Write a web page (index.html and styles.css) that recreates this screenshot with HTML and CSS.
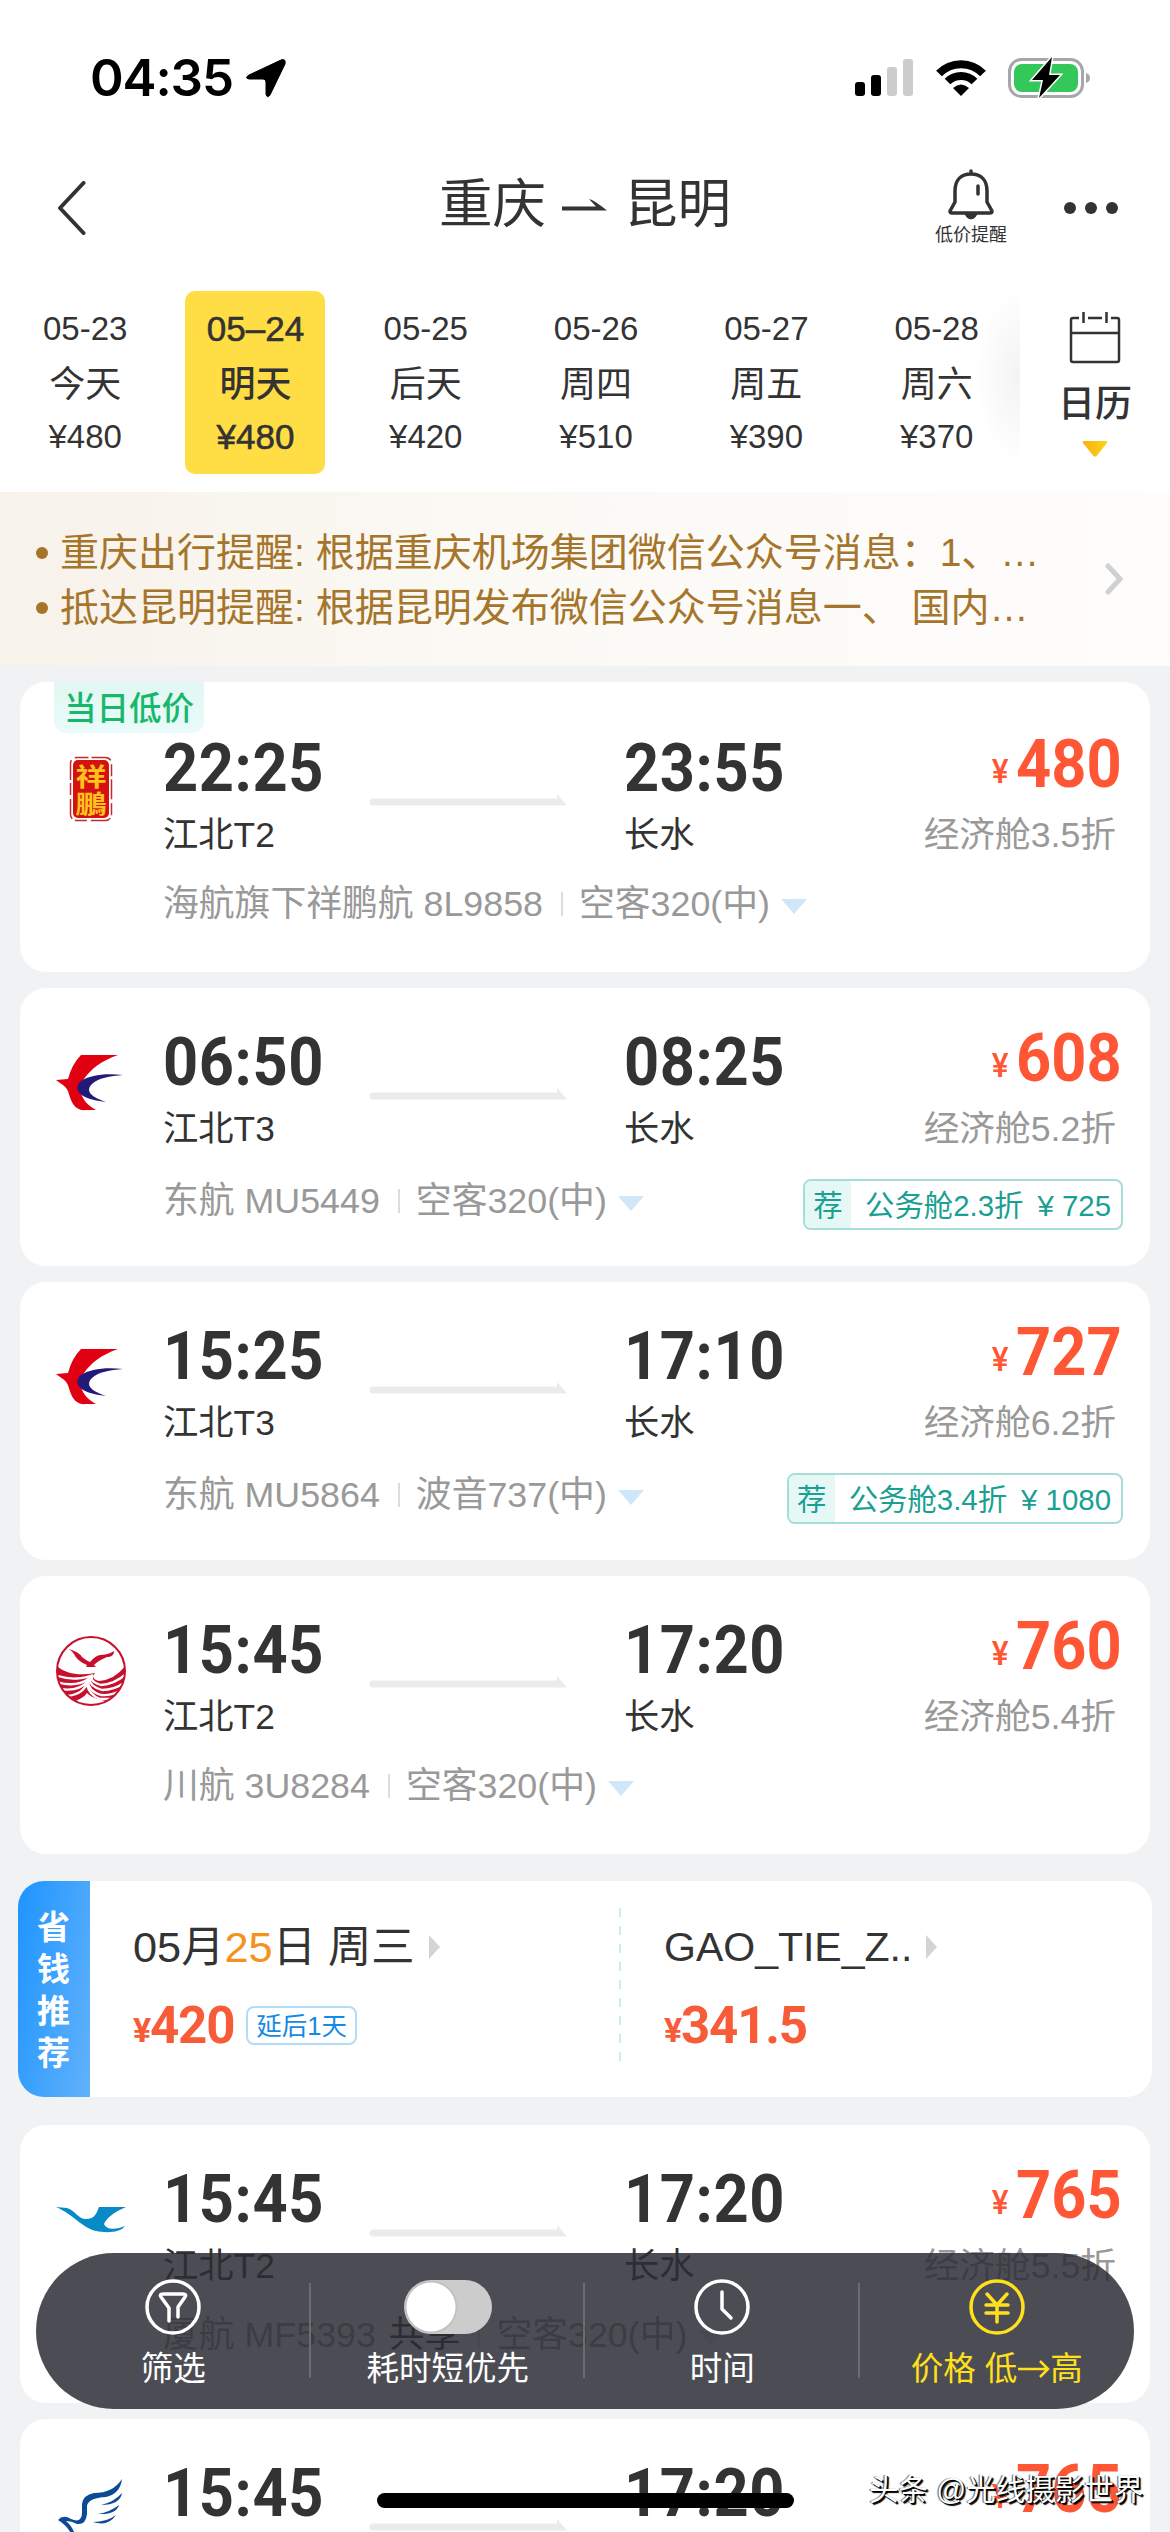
FILE: index.html
```html
<!DOCTYPE html>
<html lang="zh-CN">
<head>
<meta charset="utf-8">
<title>重庆 - 昆明</title>
<link rel="stylesheet" href="styles.css">
</head>
<body>
<svg class="defs" width="0" height="0">
  <symbol id="route" viewBox="0 0 198 12"><path d="M4 4.500H188V0l10 11.500H4a3.500 3.500 0 0 1 0-7z" fill="#ebebeb"/></symbol>
  <symbol id="down" viewBox="0 0 26 15"><path d="M0 0h26L13 15z" fill="#cfe7f9"/></symbol>
  <symbol id="eastern" viewBox="0 0 68 56">
    <path d="M26 0H63C46 6 36 14 29 24C21 35 28 48 41 55H30Q23 56 18 49C13 41 15 35 8 30Q5 28 1 25L13 24Q17 9 26 0z" fill="#e00012"/>
    <path d="M68 20C50 18 35 20 26 26C18 33 22 44 51 47C36 42 30 36 37 29C43 23 55 21 68 20z" fill="#221a7a"/>
  </symbol>
</svg>
<div class="page">
  <header class="status">
    <div class="clock">04:35
      <svg width="41" height="39" viewBox="0 0 41 39"><path d="M36 1Q41-1 40 5L25 36Q22 40 21 35V23Q21 20 18 20H4Q-1 19 4 16z" stroke="#000"/></svg>
    </div>
    <div class="signals">
      <svg width="59" height="38" viewBox="0 0 59 38"><rect y="23" width="10" height="14" rx="3"/><rect x="16" y="16" width="10" height="21" rx="3"/><g fill="#ccc"><rect x="32" y="8" width="10" height="29" rx="3"/><rect x="48" width="10" height="37" rx="3"/></g></svg>
      <svg width="50" height="38" viewBox="0 0 50 38"><g fill="none" stroke="#000" stroke-width="8"><path d="M3 14.500C15 2 35 2 47 14.500"/><path d="M11.500 22.500C19 15 31 15 38.500 22.500"/></g><path d="M17 29Q25 22 33 29L25 37z"/></svg>
      <svg width="83" height="42" viewBox="0 0 83 42"><rect x="1.500" y="2.500" width="73" height="37" rx="12" fill="none" stroke="#a5a7a8" stroke-width="3"/><rect x="6" y="7" width="64" height="28" rx="8" fill="#34c759"/><path d="M78 16q4 1 4 5t-4 5z" fill="#a5a7a8"/><path d="M44 0L24 23H35L31 41L52 18H41z" stroke="#fff" stroke-width="3" paint-order="stroke"/></svg>
    </div>
  </header>

  <nav class="nav">
    <svg class="back" width="30" height="54" viewBox="0 0 30 54"><path d="M26.500 2L3 27L26.500 52" fill="none" stroke="#333" stroke-width="4" stroke-linecap="round" stroke-linejoin="round"/></svg>
    <h1>重庆<svg width="46" height="12" viewBox="0 0 46 12"><path d="M0 7.500H34L27 0Q32 1 45 11.500H0z" fill="#333"/></svg>昆明</h1>
    <div class="alert">
      <svg width="46" height="52" viewBox="0 0 46 52" fill="none" stroke="#333" stroke-width="3.500" stroke-linejoin="round" stroke-linecap="round"><path d="M23 2V5M7 33V22C7 11 13 5 23 5S39 11 39 22V33L44 42Q44 44 42 44H4Q2 44 2 42zM30 17V25"/><path d="M17 45Q19 50 23 50T29 45z" fill="#333" stroke-width="1"/></svg>
      <span>低价提醒</span>
    </div>
    <svg class="more" width="56" height="14" viewBox="0 0 56 14" fill="#333"><circle cx="7" cy="7" r="6"/><circle cx="28" cy="7" r="6"/><circle cx="49" cy="7" r="6"/></svg>
  </nav>

  <section class="dates">
    <div class="days">
      <div class="day"><span>05-23</span><b>今天</b><span>¥480</span></div>
      <div class="day on"><span>05–24</span><b>明天</b><span>¥480</span></div>
      <div class="day"><span>05-25</span><b>后天</b><span>¥420</span></div>
      <div class="day"><span>05-26</span><b>周四</b><span>¥510</span></div>
      <div class="day"><span>05-27</span><b>周五</b><span>¥390</span></div>
      <div class="day"><span>05-28</span><b>周六</b><span>¥370</span></div>
    </div>
    <div class="calendar">
      <svg width="52" height="52" viewBox="0 0 52 52" fill="none" stroke="#333" stroke-width="2.500"><path d="M10 6H4Q2 6 2 8V48Q2 50 4 50H48Q50 50 50 48V8Q50 6 48 6H42M19 6H33M14.500 0V11M37.500 0V11M2 21H50"/></svg>
      <span>日历</span>
      <svg width="26" height="16" viewBox="0 0 26 16"><defs><linearGradient id="gold"><stop stop-color="#f5b20a"/><stop offset="1" stop-color="#ffd21e"/></linearGradient></defs><path d="M2 0H24Q26 0 25 2L14.500 15Q13 16 11.500 15L1 2Q0 0 2 0z" fill="url(#gold)"/></svg>
    </div>
  </section>

  <section class="notice">
    <ul>
      <li>重庆出行提醒: 根据重庆机场集团微信公众号消息：1、…</li>
      <li>抵达昆明提醒: 根据昆明发布微信公众号消息一、 国内…</li>
    </ul>
    <svg width="20" height="32" viewBox="0 0 20 32"><path d="M4 3L16 16L4 29" fill="none" stroke="#d0d0d0" stroke-width="5" stroke-linecap="round"/></svg>
  </section>

  <main>
    <article class="card low">
      <div class="badge">当日低价</div>
      <div class="logo"><svg width="44" height="66" viewBox="0 0 44 66"><rect x="1.500" y="1.500" width="41" height="63" rx="6" fill="#fff" stroke="#c22a2e" stroke-width="1.500" stroke-dasharray="12 3 20 4"/><rect x="4" y="4" width="36" height="58" rx="5" fill="#d5120f"/><text x="22" y="30" textLength="31" lengthAdjust="spacingAndGlyphs">祥</text><text x="22" y="57" textLength="31" lengthAdjust="spacingAndGlyphs">鵬</text></svg></div>
      <div class="time">22:25</div><svg class="route"><use href="#route"/></svg><div class="time arr">23:55</div>
      <div class="price"><i>¥</i>480</div>
      <div class="port">江北T2</div><div class="port arr">长水</div><div class="cabin">经济舱3.5折</div>
      <div class="info"><span>海航旗下祥鹏航 8L9858</span><span>空客320(中)</span><svg><use href="#down"/></svg></div>
    </article>

    <article class="card tagged">
      <div class="logo"><svg width="68" height="56"><use href="#eastern"/></svg></div>
      <div class="time">06:50</div><svg class="route"><use href="#route"/></svg><div class="time arr">08:25</div>
      <div class="price"><i>¥</i>608</div>
      <div class="port">江北T3</div><div class="port arr">长水</div><div class="cabin">经济舱5.2折</div>
      <div class="info"><span>东航 MU5449</span><span>空客320(中)</span><svg><use href="#down"/></svg></div>
      <div class="tag"><b>荐</b><span>公务舱2.3折</span><span>¥ 725</span></div>
    </article>

    <article class="card tagged">
      <div class="logo"><svg width="68" height="56"><use href="#eastern"/></svg></div>
      <div class="time">15:25</div><svg class="route"><use href="#route"/></svg><div class="time arr">17:10</div>
      <div class="price"><i>¥</i>727</div>
      <div class="port">江北T3</div><div class="port arr">长水</div><div class="cabin">经济舱6.2折</div>
      <div class="info"><span>东航 MU5864</span><span>波音737(中)</span><svg><use href="#down"/></svg></div>
      <div class="tag"><b>荐</b><span>公务舱3.4折</span><span>¥ 1080</span></div>
    </article>

    <article class="card">
      <div class="logo"><svg width="70" height="70" viewBox="0 0 70 70"><defs><clipPath id="disc"><circle cx="35" cy="35" r="34"/></clipPath></defs>
        <g clip-path="url(#disc)"><path d="M0 29C8 38 24 40 39 37Q34 43 43 45Q59 44 70 29V70H0z" fill="#c8102e"/>
        <g fill="none" stroke="#fff" stroke-width="2.300"><path d="M2 40C14 44 28 43 37 39Q32 45 45 49Q59 48 70 38"/><path d="M1 46C14 50 26 48 34 42Q32 50 46 54Q58 54 68 47"/><path d="M4 53C16 55 26 52 32 45Q32 55 45 59Q54 60 64 55"/><path d="M8 60C18 60 27 56 31 48Q33 59 44 63L57 63"/></g>
        <path d="M16 66Q27 63 31 57Q36 63 54 66L35 72z" fill="#fff"/></g>
        <circle cx="35" cy="35" r="34" fill="none" stroke="#c8102e" stroke-width="2"/>
        <path d="M13 13Q23 16 26 21Q31 25 34 26Q39 20 44 19Q52 19 58 15Q58 21 51 21Q43 24 38 29L40 31H30L31 29Q21 25 18 18Q16 15 13 13z" fill="#c8102e"/></svg></div>
      <div class="time">15:45</div><svg class="route"><use href="#route"/></svg><div class="time arr">17:20</div>
      <div class="price"><i>¥</i>760</div>
      <div class="port">江北T2</div><div class="port arr">长水</div><div class="cabin">经济舱5.4折</div>
      <div class="info"><span>川航 3U8284</span><span>空客320(中)</span><svg><use href="#down"/></svg></div>
    </article>

    <section class="promo">
      <div class="promo-label">省钱推荐</div>
      <div class="deal">
        <div class="deal-name date">05月<em>25</em>日 周三<svg width="11" height="24" viewBox="0 0 11 24"><path d="M0 0L11 12L0 24z" fill="#d4d4d4"/></svg></div>
        <div class="deal-price"><i>¥</i>420<span>延后1天</span></div>
      </div>
      <div class="rule"></div>
      <div class="deal">
        <div class="deal-name">GAO_TIE_Z..<svg width="11" height="24" viewBox="0 0 11 24"><path d="M0 0L11 12L0 24z" fill="#d4d4d4"/></svg></div>
        <div class="deal-price"><i>¥</i>341.5</div>
      </div>
    </section>

    <article class="card">
      <div class="logo"><svg width="70" height="26" viewBox="0 0 70 26"><path d="M0 0L11 1C20 4 22 12 30 12C38 12 40 8 43 0H70C60 4 50 11 48 17C51 24 62 22 69 19C64 26 50 26 40 24C25 20 18 8 0 0z" fill="#078ac5"/></svg></div>
      <div class="time">15:45</div><svg class="route"><use href="#route"/></svg><div class="time arr">17:20</div>
      <div class="price"><i>¥</i>765</div>
      <div class="port">江北T2</div><div class="port arr">长水</div><div class="cabin">经济舱5.5折</div>
      <div class="info"><span>厦航 MF5393 <em>共享</em></span><span>空客320(中)</span><svg><use href="#down"/></svg></div>
    </article>

    <article class="card">
      <div class="logo"><svg width="66" height="70" viewBox="0 0 66 70" fill="#0d4a94"><path d="M64 0Q62 15 48 18Q30 19 29 27V35Q28 46 19 45Q14 42 8 42Q15 48 17 56L15 58Q10 47 0 41Q5 35 13 40Q24 45 24 33V25Q25 16 36 14Q55 14 64 0z"/><path d="M64 14Q62 26 43 26Q56 23 64 14zM61 26Q58 36 40 35Q52 33 61 26zM58 36Q50 48 35 43Q49 43 58 36z"/></svg></div>
      <div class="time">15:45</div><svg class="route"><use href="#route"/></svg><div class="time arr">17:20</div>
      <div class="price"><i>¥</i>765</div>
    </article>
  </main>

  <div class="toolbar">
    <div class="tool"><svg width="56" height="56" viewBox="0 0 56 56" fill="none" stroke="#fff" stroke-width="3.500" stroke-linecap="round" stroke-linejoin="round"><circle cx="28" cy="28" r="26"/><path d="M24 42V29L16 18Q14 15 18 15H38Q42 15 40 18L33 28V38"/></svg><span>筛选</span></div>
    <div class="tool"><div class="switch"></div><span>耗时短优先</span></div>
    <div class="tool"><svg width="56" height="56" viewBox="0 0 56 56" fill="none" stroke="#fff" stroke-width="3.500" stroke-linecap="round" stroke-linejoin="round"><circle cx="28" cy="28" r="26"/><path d="M28 13V30L37 39"/></svg><span>时间</span></div>
    <div class="tool on"><svg width="56" height="56" viewBox="0 0 56 56" fill="none" stroke="#ffe01b" stroke-width="3.500" stroke-linecap="round" stroke-linejoin="round"><circle cx="28" cy="28" r="26"/><path d="M18 15L28 26L38 15M17 26H39M17 34H39M28 26V43"/></svg><span>价格 低<svg class="to" width="33" height="18" viewBox="0 0 33 18" fill="none" stroke="#ffe01b" stroke-width="2.500"><path d="M1 9H31M23 1L31 9L23 17"/></svg>高</span></div>
  </div>
  <div class="home"></div>
  <div class="watermark">头条 @光线摄影世界</div>
</div>
</body>
</html>
```

FILE: styles.css
```css
* { box-sizing: border-box; }
body { margin: 0; background: #fff; font-family: "Liberation Sans", "Noto Sans CJK SC", sans-serif; color: #333; }
svg { display: block; flex: none; }
i, em { font-style: normal; }
.defs { position: absolute; }
.page { position: relative; width: 1170px; height: 2532px; overflow: hidden; background: #f1f2f4; }

.status { height: 156px; padding: 0 79px 0 90px; background: #fff; display: flex; justify-content: space-between; align-items: center; }
.clock { display: flex; align-items: center; gap: 12px; font: 600 51px/60px Inter, sans-serif; letter-spacing: -1.100px; color: #000; }
.signals { display: flex; align-items: center; gap: 22px; }

.nav { height: 104px; padding: 0 51px 0 57px; background: #fff; display: grid; grid-template-columns: 382px 1fr 72px 112px; align-items: center; }
.nav h1 { margin: 0; display: flex; align-items: center; gap: 16px; font-size: 53.500px; line-height: 60px; font-weight: 400; padding-bottom: 7px; }
.alert { display: flex; flex-direction: column; align-items: center; gap: 1px; font-size: 18px; line-height: 26px; }
.more { justify-self: end; }

.dates { height: 232px; background: #fff; display: flex; }
.days { width: 1020px; padding: 31px 0 18px; display: grid; grid-template-columns: repeat(6, 170.300px); overflow: hidden; background: radial-gradient(ellipse 45px 90px at 100% 50%, #f3f3f3, #fff); }
.day { display: flex; flex-direction: column; align-items: center; padding-top: 11px; font-size: 33px; line-height: 54px; }
.day b { font-size: 36px; font-weight: 400; padding-top: 2px; margin-bottom: -2px; }
.day.on { width: 140px; justify-self: center; background: #fd4; border-radius: 10px; font-size: 35px; -webkit-text-stroke: .6px #333; }
.day.on b { font-weight: 500; -webkit-text-stroke: 0; }
.calendar { width: 150px; padding-top: 52px; display: flex; flex-direction: column; align-items: center; font-size: 37px; font-weight: 500; line-height: 77px; }
.calendar span { padding-top: 2px; margin-bottom: -2px; }

.notice { height: 174px; padding: 0 46px 0 36px; display: flex; align-items: center; justify-content: space-between; background: linear-gradient(90deg, #f7f2ea, #fbf9f4 40%, #fefdfc); }
.notice ul { margin: 0; padding: 2px 0 0; list-style: none; color: #a6752c; font-size: 39px; line-height: 55px; }
.notice li { display: flex; align-items: center; gap: 12px; white-space: pre; }
.notice li::before { content: ""; width: 12px; height: 12px; border-radius: 50%; background: #a6752c; }

main { padding: 16px 20px 0; display: flex; flex-direction: column; gap: 16px; }
.card { height: 278px; flex: none; background: #fff; border-radius: 26px; padding: 40px 30px 0 0; display: grid; grid-template-columns: 143px 206px 255px 1fr 0; grid-template-rows: 70px 42px 60px; row-gap: 10px; align-content: start; position: relative; }
.card.low { height: 290px; padding-top: 52px; }
.badge { position: absolute; left: 34px; top: 0; width: 150px; height: 51px; border-radius: 0 0 12px 12px; background: linear-gradient(#e2f7f1, #e9fbfa); color: #17b86c; font-size: 32.500px; font-weight: 500; line-height: 54px; text-align: center; }
.logo { grid-area: 1 / 1 / 3 / 2; justify-self: center; width: 70px; height: 110px; margin-right: 2px; display: flex; align-items: center; justify-content: center; }
.tagged .logo { margin-right: 6px; }
.logo text { font: 700 25px "Noto Sans CJK SC", sans-serif; fill: #ffc31c; text-anchor: middle; }
.time, .price { font: 700 66px/70px Roboto, sans-serif; white-space: nowrap; }
.time { grid-area: 1 / 2; transform: scaleX(.93); transform-origin: left; letter-spacing: .6px; }
.time.arr, .port.arr { grid-column: 4; }
.time.arr { justify-self: start; }
.route { grid-area: 1 / 3; width: 198px; height: 12px; align-self: end; margin-bottom: -2px; }
.price { grid-area: 1 / 4; justify-self: end; color: #ff5635; transform: scaleX(.93); transform-origin: right; margin: -4px -2px 0 0; }
.price i { display: inline-block; font-size: 34px; font-weight: 500; margin-right: 8px; transform: translateY(-4px); }
.port, .cabin { grid-area: 2 / 2; font-size: 35.300px; line-height: 42px; white-space: nowrap; }
.cabin { grid-area: 2 / 4; justify-self: end; color: #999; font-size: 35.700px; margin-right: 4px; }
.info { grid-area: 3 / 2 / 4 / 5; justify-self: start; color: #999; font-size: 35.800px; line-height: 36px; height: 36px; display: flex; align-items: center; white-space: nowrap; margin-top: 20px; }
.tagged .info { margin-top: 23px; }
.info span + span { margin-left: 18px; padding-left: 18px; background: linear-gradient(#ddd, #ddd) 0 6px / 2px 24px no-repeat; }
.info em { color: #333; margin-left: 3px; }
.info svg { width: 26px; height: 15px; margin: 4px 0 0 11px; }
.tag { grid-area: 3 / 4; justify-self: end; align-self: start; margin: 19px -3px 0 0; height: 51px; border: 2px solid #a4ded6; border-radius: 8px; overflow: hidden; display: flex; gap: 14px; padding-right: 10px; color: #1a9f92; font-size: 29.400px; line-height: 49px; white-space: nowrap; }
.tag b { width: 46px; background: #e6f8f6; text-align: center; font-weight: 400; }

.promo { height: 216px; margin: 11px -2px 12px; background: #fff; border-radius: 26px; overflow: hidden; display: flex; }
.promo-label { width: 72px; padding: 26px 20px 0 19px; background: linear-gradient(100deg, #1d94ff, #62b2fb); color: #fff; font-size: 33px; font-weight: 700; line-height: 42px; word-break: break-all; }
.deal { width: 529px; padding: 39px 0 0 43px; }
.deal-name { display: flex; align-items: center; font-size: 41px; line-height: 54px; white-space: pre; }
.deal-name.date { font-size: 43.300px; }
.deal-name em { color: #f5921e; }
.deal-name svg { margin-left: 14px; }
.deal-price { display: flex; align-items: center; margin-top: 17px; font: 700 51px/60px Roboto, sans-serif; letter-spacing: -1.200px; color: #f75b38; }
.deal-price i { font-size: 34px; padding-top: 9px; }
.deal-price span { margin-left: 12px; height: 39px; padding: 0 8px; border: 2px solid #b5dcf7; border-radius: 8px; font: 25.500px/36px "Liberation Sans", "Noto Sans CJK SC", sans-serif; letter-spacing: 0; color: #158ae4; }
.rule { width: 2px; margin: 27px 0; background: repeating-linear-gradient(#cdeaf5 0 9px, transparent 9px 18px); }

.toolbar { position: absolute; left: 36px; top: 2253px; width: 1098px; height: 156px; border-radius: 78px; background: rgba(43, 44, 52, .845); display: grid; grid-template-columns: repeat(4, 1fr); color: #fff; }
.tool { display: flex; flex-direction: column; align-items: center; padding-top: 26px; font-size: 32.500px; line-height: 40px; gap: 14px; background: linear-gradient(#6b6b70, #6b6b70) 100% 30px / 2px 95px no-repeat; }
.tool span { display: flex; align-items: center; white-space: pre; }
.tool.on { color: #ffe01b; background: none; }
.switch { width: 88px; height: 54px; margin: 1px 0; border-radius: 27px; background: radial-gradient(circle at 27px 27px, #fff 24px, #bdbdbd 25px, #ccc 27px); }
.home { position: absolute; left: 377px; top: 2493px; width: 417px; height: 15px; border-radius: 8px; background: #000; }
.watermark { position: absolute; left: 869px; top: 2469px; font-size: 29.500px; line-height: 42px; color: #fff; white-space: nowrap; text-shadow: 2px 2px 1px #000, 1px 1px 0 #000, -1px 0 1px #555; }
```
